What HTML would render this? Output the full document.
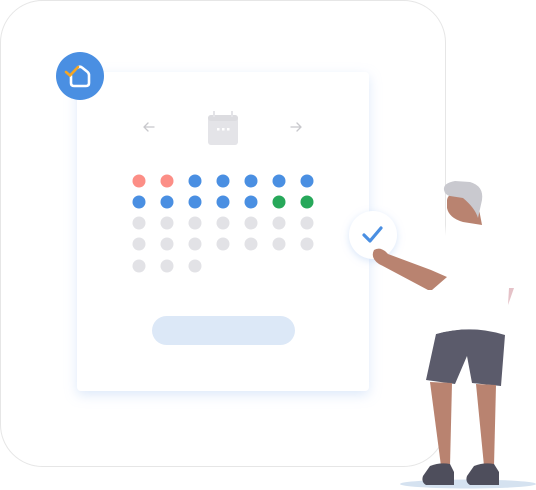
<!DOCTYPE html>
<html><head><style>
html,body{margin:0;padding:0;background:#fff;width:536px;height:490px;overflow:hidden}
</style></head><body>
<svg width="536" height="490" viewBox="0 0 536 490" xmlns="http://www.w3.org/2000/svg">
<defs>
<filter id="sh" x="-20%" y="-20%" width="140%" height="140%"><feDropShadow dx="0" dy="4" stdDeviation="6" flood-color="#9dbff0" flood-opacity="0.35"/></filter>
<filter id="sh2" x="-40%" y="-40%" width="180%" height="180%"><feDropShadow dx="0" dy="2" stdDeviation="4" flood-color="#9dbff0" flood-opacity="0.4"/></filter>
</defs>
<rect x="0.5" y="0.5" width="445" height="466" rx="42" fill="#fff" stroke="#e6e6e6"/>
<rect x="77" y="72" width="292" height="319" rx="4" fill="#fff" filter="url(#sh)"/>
<!-- logo -->
<circle cx="80" cy="76" r="24" fill="#4a8fe2"/>
<path d="M71 76 L71 83 Q71 86 74 86 L86 86 Q89 86 89 83 L89 75 Q89 73 87 71.5 L82 67.5 Q80 66 78 67.5" fill="none" stroke="#fff" stroke-width="2.6" stroke-linecap="round" stroke-linejoin="round"/>
<path d="M66 72 L70 75.5 L78 67" fill="none" stroke="#f5a623" stroke-width="2.6" stroke-linecap="round" stroke-linejoin="round"/>
<!-- arrows -->
<path d="M154 127 H144 M148 123 L144 127 L148 131" fill="none" stroke="#c8c8cc" stroke-width="1.3" stroke-linecap="round"/>
<path d="M291 127 H301 M297 123 L301 127 L297 131" fill="none" stroke="#c8c8cc" stroke-width="1.3" stroke-linecap="round"/>
<!-- calendar -->
<rect x="208" y="115" width="30" height="30" rx="3" fill="#e4e4e8"/>
<rect x="208" y="115" width="30" height="6" rx="3" fill="#dcdce0"/>
<rect x="213" y="111" width="2" height="6" fill="#e4e4e8"/><rect x="231" y="111" width="2" height="6" fill="#e4e4e8"/>
<rect x="217" y="128" width="2.5" height="2.5" fill="#fff"/><rect x="222" y="128" width="2.5" height="2.5" fill="#fff"/><rect x="227" y="128" width="2.5" height="2.5" fill="#fff"/>
<!-- dots -->
<g>
<circle cx="139" cy="181" r="6.5" fill="#fc8e86"/><circle cx="167" cy="181" r="6.5" fill="#fc8e86"/>
<circle cx="195" cy="181" r="6.5" fill="#4a8fe2"/><circle cx="223" cy="181" r="6.5" fill="#4a8fe2"/><circle cx="251" cy="181" r="6.5" fill="#4a8fe2"/><circle cx="279" cy="181" r="6.5" fill="#4a8fe2"/><circle cx="307" cy="181" r="6.5" fill="#4a8fe2"/>
<circle cx="139" cy="202" r="6.5" fill="#4a8fe2"/><circle cx="167" cy="202" r="6.5" fill="#4a8fe2"/><circle cx="195" cy="202" r="6.5" fill="#4a8fe2"/><circle cx="223" cy="202" r="6.5" fill="#4a8fe2"/><circle cx="251" cy="202" r="6.5" fill="#4a8fe2"/>
<circle cx="279" cy="202" r="6.5" fill="#27a85a"/><circle cx="307" cy="202" r="6.5" fill="#27a85a"/>
</g>
<g fill="#e2e2e6">
<circle cx="139" cy="223" r="6.5"/><circle cx="167" cy="223" r="6.5"/><circle cx="195" cy="223" r="6.5"/><circle cx="223" cy="223" r="6.5"/><circle cx="251" cy="223" r="6.5"/><circle cx="279" cy="223" r="6.5"/><circle cx="307" cy="223" r="6.5"/>
<circle cx="139" cy="244" r="6.5"/><circle cx="167" cy="244" r="6.5"/><circle cx="195" cy="244" r="6.5"/><circle cx="223" cy="244" r="6.5"/><circle cx="251" cy="244" r="6.5"/><circle cx="279" cy="244" r="6.5"/><circle cx="307" cy="244" r="6.5"/>
<circle cx="139" cy="266" r="6.5"/><circle cx="167" cy="266" r="6.5"/><circle cx="195" cy="266" r="6.5"/>
</g>
<rect x="152" y="316" width="143" height="29" rx="14.5" fill="#dce8f7"/>
<!-- person -->
<ellipse cx="468" cy="484" rx="68" ry="4.5" fill="#d5e2f0"/>
<path d="M436 334 Q470 324 505 335 L501 386 L472 383 L467 356 L455 384 L426 380 Z" fill="#5b5b6b"/>
<path d="M430 382 L452 383 L450 466 L441 466 Z" fill="#b98370"/>
<path d="M476 384 L496 385 L494 466 L484 466 Z" fill="#b98370"/>
<path d="M430 466 Q440 462 450 464 L454 472 L454 485 L426 485 Q421 482 423 476 Z" fill="#4e4e5c"/>
<path d="M474 466 Q484 462 494 464 L499 472 L499 485 L470 485 Q465 482 467 476 Z" fill="#4e4e5c"/>
<path d="M455 220 L486 220 Q508 232 512 290 L515 335 Q470 324 436 334 L446 225 Z" fill="#fff"/>
<path d="M509 288 L514 288 L508 305 Z" fill="#e5c2c8"/>
<circle cx="373" cy="235" r="24" fill="#fff" filter="url(#sh2)"/>
<path d="M364 235 L370 241 L381 228" fill="none" stroke="#4a8fe2" stroke-width="3.2" stroke-linecap="round" stroke-linejoin="round"/>
<path d="M374 250 Q381 246 388 254 L431 270 L447 277 L432 290 L428 290 L379 264 Q370 258 374 250 Z" fill="#b98370"/>
<path d="M447 200 Q448 194 455 193 Q468 192 478 204 L482 225 L463 222 Q449 218 447 208 Z" fill="#b98370"/>
<path d="M444 190 Q443 183 455 181 L470 182 Q484 186 482 200 L478 218 Q475 208 463 198 L450 196 Q445 195 444 190 Z" fill="#c9c9cf"/>
</svg>
</body></html>
